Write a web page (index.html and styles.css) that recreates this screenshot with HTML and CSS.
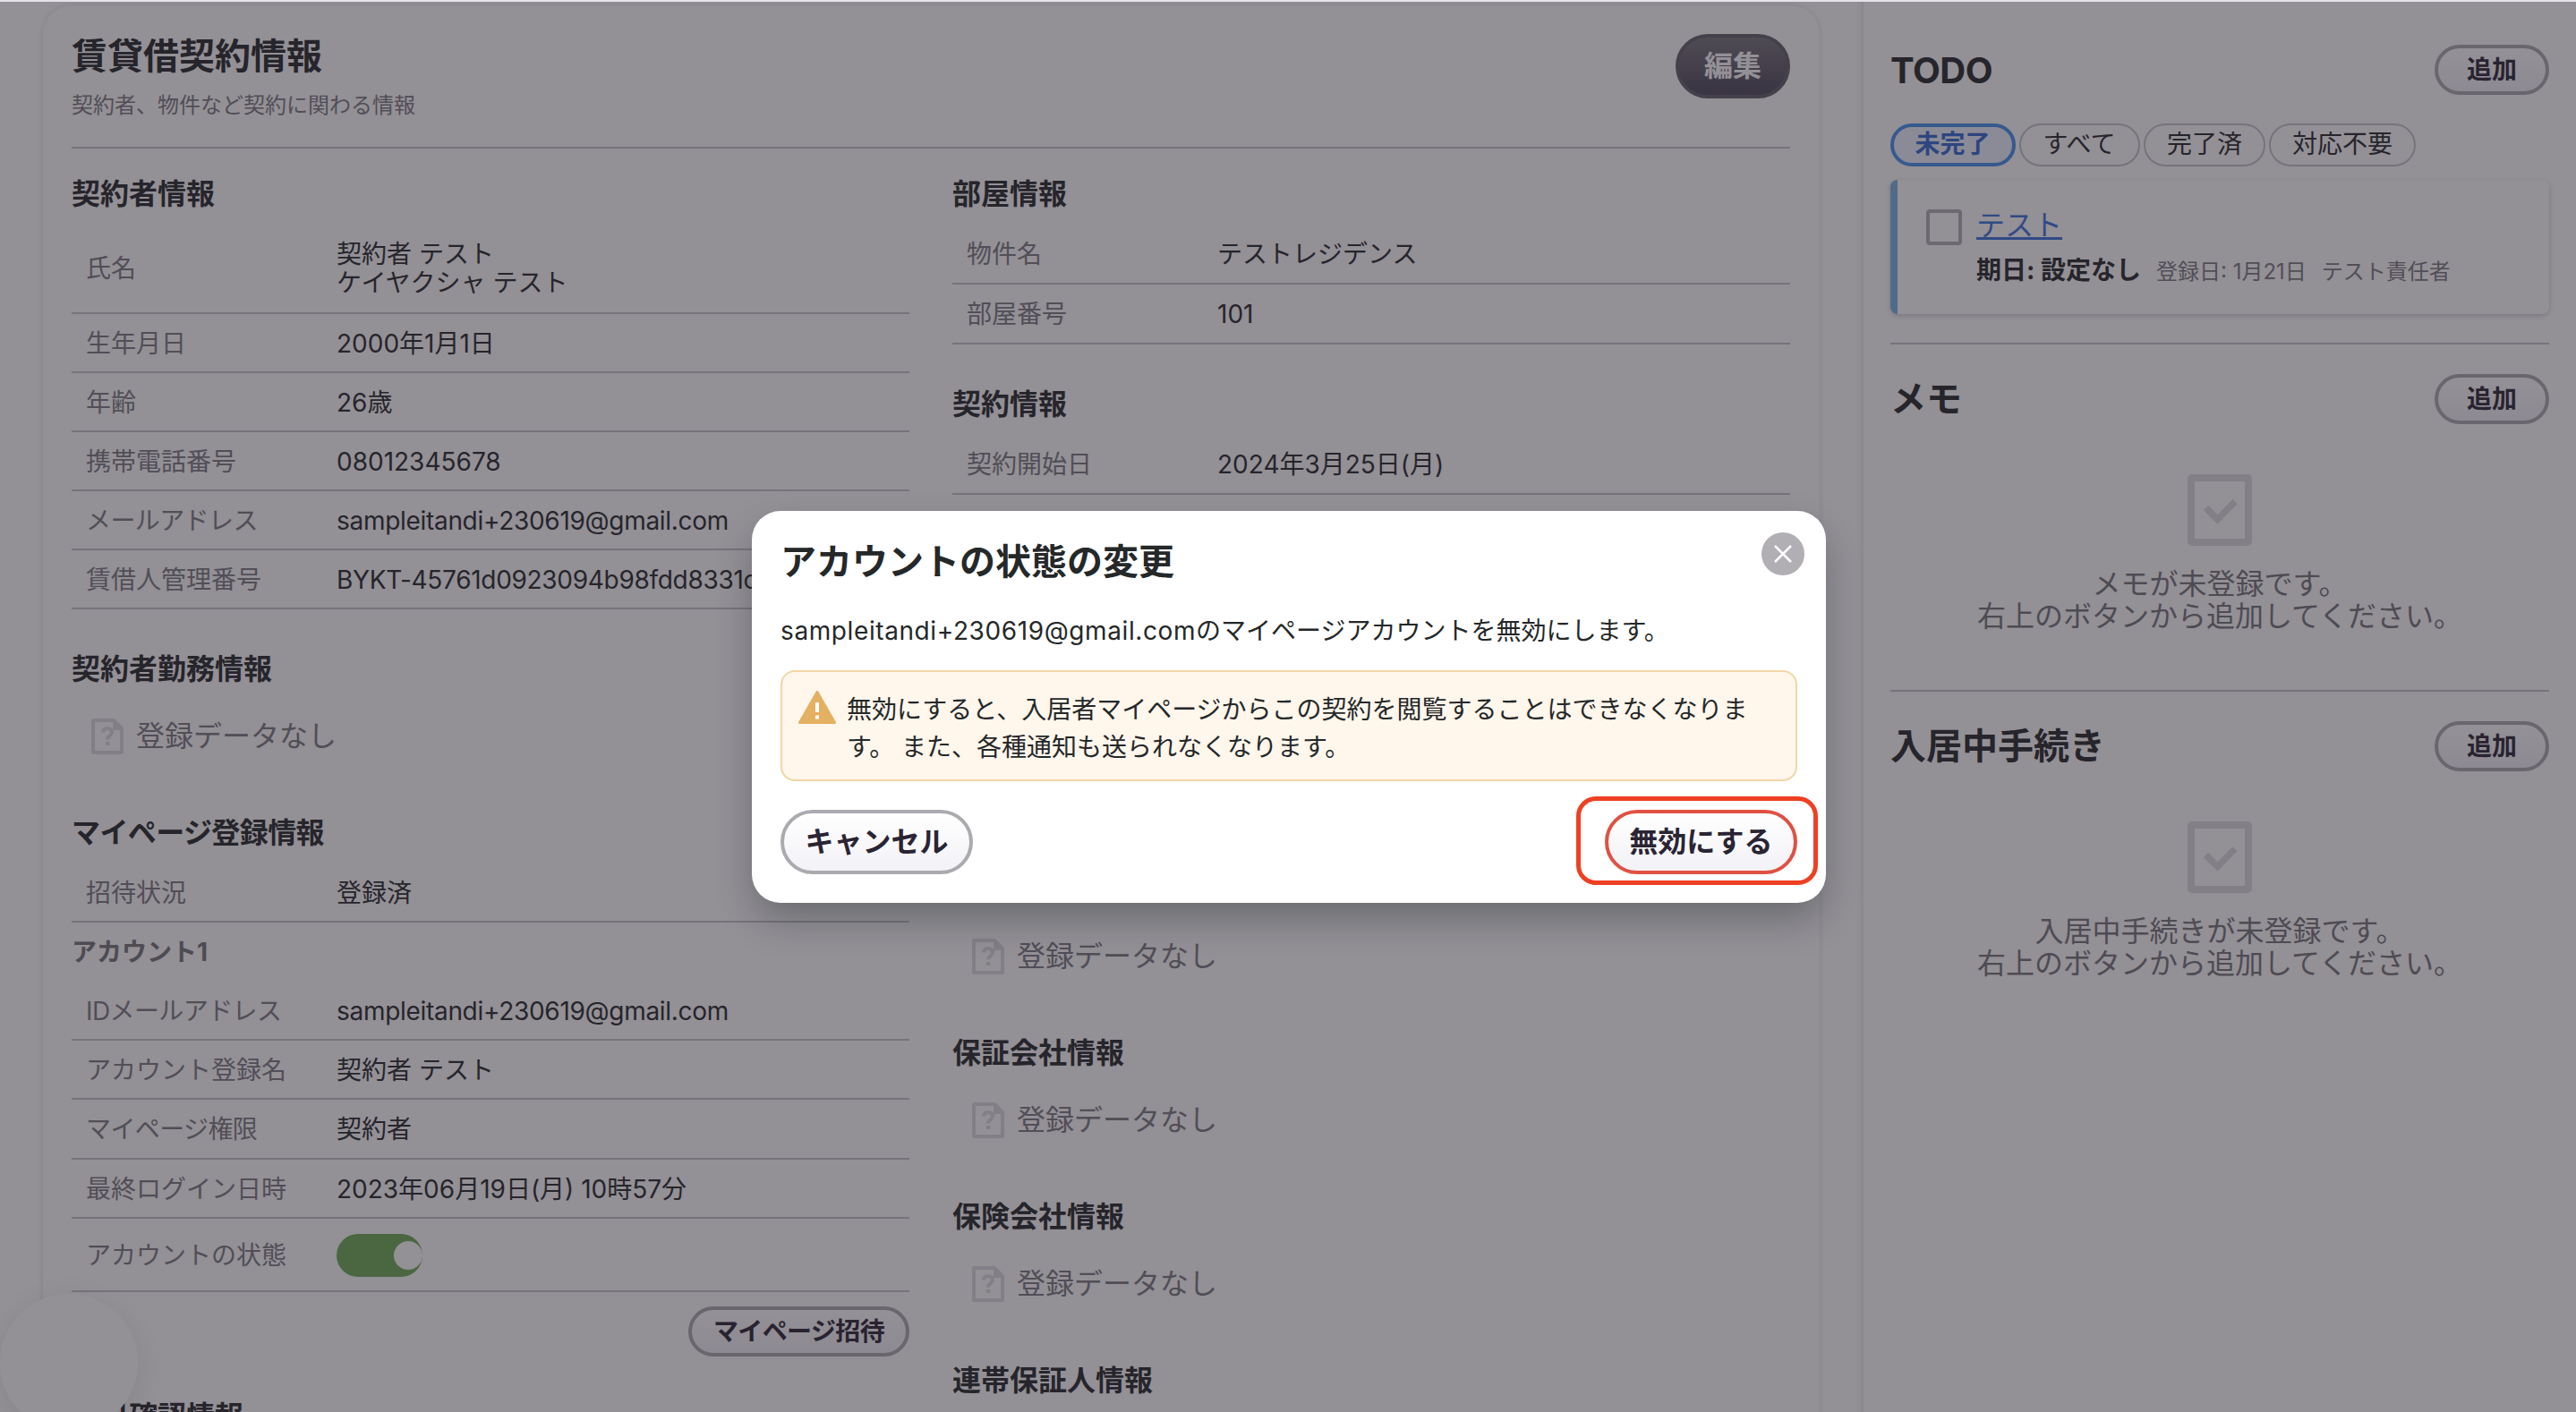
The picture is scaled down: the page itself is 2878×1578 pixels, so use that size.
FILE: index.html
```
<!DOCTYPE html>
<html lang="ja">
  <head>
    <meta charset="UTF-8" />
    <meta name="viewport" content="width=device-width, initial-scale=1.0" />
    <title>賃貸借契約情報</title>
    <link rel="stylesheet" href="styles.css">
  </head>
  <body>
    <svg class="sprite">
      <symbol id="icon-doc" viewBox="0 0 36 40">
        <path d="M2 2h23l9 9v27H2z" fill="none" stroke="currentColor" stroke-width="4" stroke-linejoin="round" />
        <path d="M24 2v11h11z" fill="currentColor" />
        <path d="M13 15.500c0-6 10-6 10 0 0 4-5 3.500-5 8" fill="none" stroke="currentColor" stroke-width="4" />
        <rect x="16" y="26" width="4.500" height="4" fill="currentColor" />
      </symbol>
      <symbol id="icon-check" viewBox="0 0 72 80">
        <rect x="4" y="4" width="64" height="72" rx="1" fill="none" stroke="currentColor" stroke-width="8" />
        <path d="M20.500 37.500l13 13 19.500-20" fill="none" stroke="currentColor" stroke-width="7.500" />
      </symbol>
    </svg>

    <div class="page">
      <main class="contract">
        <header class="contract-header">
          <div>
            <h1>賃貸借契約情報</h1>
            <p class="lead">契約者、物件など契約に関わる情報</p>
          </div>
          <button class="btn btn-large btn-dark">編集</button>
        </header>

        <div class="columns">
          <div class="column">
            <section class="info">
              <h2>契約者情報</h2>
              <dl>
                <div class="row row-name"><dt>氏名</dt><dd>契約者 テスト<br>ケイヤクシャ テスト</dd></div>
                <div class="row"><dt>生年月日</dt><dd>2000年1月1日</dd></div>
                <div class="row"><dt>年齢</dt><dd>26歳</dd></div>
                <div class="row"><dt>携帯電話番号</dt><dd>08012345678</dd></div>
                <div class="row"><dt class="kana">メールアドレス</dt><dd class="latin">sampleitandi+230619@gmail.com</dd></div>
                <div class="row"><dt>賃借人管理番号</dt><dd class="latin">BYKT-45761d0923094b98fdd8331c</dd></div>
              </dl>
            </section>
            <section class="info">
              <h2>契約者勤務情報</h2>
              <p class="empty"><svg><use href="#icon-doc" /></svg>登録データなし</p>
            </section>
            <section class="info">
              <h2 class="kana">マイページ登録情報</h2>
              <dl>
                <div class="row"><dt>招待状況</dt><dd>登録済</dd></div>
              </dl>
              <h3>アカウント1</h3>
              <dl>
                <div class="row"><dt class="kana">IDメールアドレス</dt><dd class="latin">sampleitandi+230619@gmail.com</dd></div>
                <div class="row"><dt>アカウント登録名</dt><dd>契約者 テスト</dd></div>
                <div class="row row-tall"><dt class="kana">マイページ権限</dt><dd>契約者</dd></div>
                <div class="row"><dt>最終ログイン日時</dt><dd>2023年06月19日(月) 10時57分</dd></div>
                <div class="row row-toggle"><dt>アカウントの状態</dt><dd><span class="toggle"></span></dd></div>
              </dl>
              <div class="row-action"><button class="btn btn-invite">マイページ招待</button></div>
            </section>
            <section class="info">
              <h2>本日確認情報</h2>
            </section>
          </div>

          <div class="column">
            <section class="info">
              <h2>部屋情報</h2>
              <dl>
                <div class="row row-tall"><dt>物件名</dt><dd>テストレジデンス</dd></div>
                <div class="row row-tall"><dt>部屋番号</dt><dd>101</dd></div>
              </dl>
            </section>
            <section class="info info-contract">
              <h2>契約情報</h2>
              <dl>
                <div class="row row-tall"><dt>契約開始日</dt><dd>2024年3月25日(月)</dd></div>
              </dl>
            </section>
            <section class="info">
              <h2>仲介担当会社情報</h2>
              <p class="empty"><svg><use href="#icon-doc" /></svg>登録データなし</p>
            </section>
            <section class="info">
              <h2>保証会社情報</h2>
              <p class="empty"><svg><use href="#icon-doc" /></svg>登録データなし</p>
            </section>
            <section class="info">
              <h2>保険会社情報</h2>
              <p class="empty"><svg><use href="#icon-doc" /></svg>登録データなし</p>
            </section>
            <section class="info">
              <h2>連帯保証人情報</h2>
            </section>
          </div>
        </div>
      </main>

      <aside class="side">
        <section class="panel panel-todo">
          <div class="panel-header">
            <h2>TODO</h2>
            <button class="btn">追加</button>
          </div>
          <div class="tabs">
            <span class="tab active">未完了</span>
            <span class="tab">すべて</span>
            <span class="tab">完了済</span>
            <span class="tab">対応不要</span>
          </div>
          <div class="todo">
            <span class="checkbox"></span>
            <div>
              <a class="todo-title">テスト</a>
              <p class="todo-meta"><b>期日: 設定なし</b><span>登録日: 1月21日</span><span>テスト責任者</span></p>
            </div>
          </div>
        </section>
        <section class="panel">
          <div class="panel-header">
            <h2>メモ</h2>
            <button class="btn">追加</button>
          </div>
          <div class="panel-empty">
            <svg><use href="#icon-check" /></svg>
            <p>メモが未登録です。<br>右上のボタンから追加してください。</p>
          </div>
        </section>
        <section class="panel">
          <div class="panel-header">
            <h2>入居中手続き</h2>
            <button class="btn">追加</button>
          </div>
          <div class="panel-empty">
            <svg><use href="#icon-check" /></svg>
            <p>入居中手続きが未登録です。<br>右上のボタンから追加してください。</p>
          </div>
        </section>
      </aside>
    </div>

    <div class="chat-button"></div>

    <div class="overlay">
      <div class="modal">
        <div class="modal-header">
          <h2>アカウントの状態の変更</h2>
          <span class="close">
            <svg viewBox="0 0 20 20"><path d="M1 1l18 18M19 1L1 19" stroke="#fff" stroke-width="2.500" /></svg>
          </span>
        </div>
        <p class="modal-text"><span class="mail">sampleitandi+230619@gmail.com</span>のマイページアカウントを無効にします。</p>
        <div class="alert">
          <svg viewBox="0 0 42 37">
            <path d="M21 1.500L40.500 35.500H1.500z" fill="#e4b061" stroke="#e4b061" stroke-width="3" stroke-linejoin="round" />
            <path d="M21 13v11M21 27.500v4" stroke="#fff" stroke-width="4" />
          </svg>
          <p>無効にすると、入居者マイページからこの契約を閲覧することはできなくなります。 また、各種通知も送られなくなります。</p>
        </div>
        <div class="modal-actions">
          <button class="btn btn-large">キャンセル</button>
          <button class="btn btn-large btn-danger">無効にする</button>
        </div>
      </div>
    </div>
  </body>
</html>
```
FILE: styles.css
```
* {
  box-sizing: border-box;
}
body {
  margin: 0;
  width: 2878px;
  height: 1578px;
  overflow: hidden;
  position: relative;
  font-family: Inter, "Noto Sans CJK JP", sans-serif;
  font-size: 28px;
  line-height: 32px;
  color: #252829;
  background-color: #fff;
}
h1, h2, h3, p, dl, dd {
  margin: 0;
}
button {
  font-family: inherit;
}
.sprite {
  display: none;
}
.page {
  display: flex;
  height: 1578px;
  padding-top: 6px;
  overflow: hidden;
}

/* 契約情報 */
.contract {
  width: 1985px;
  height: 1700px;
  margin: 0 47px 0 48px;
  padding: 32px 33px 0 32px;
  border-radius: 32px;
  box-shadow: 0 0 6px rgba(0, 20, 20, 0.14);
  flex-shrink: 0;
}
.contract-header {
  display: flex;
  justify-content: space-between;
  align-items: flex-start;
  height: 128px;
  border-bottom: 2px solid #c5c5c8;
}
h1 {
  font-size: 40px;
  line-height: 50px;
}
.lead {
  margin-top: 14px;
  font-size: 24px;
  color: #7b7b80;
}
.columns {
  display: flex;
  gap: 48px;
}
.column {
  width: 936px;
}
.info {
  padding-top: 31px;
  margin-bottom: 16px;
}
.info h2 {
  font-size: 32px;
  line-height: 40px;
  margin-bottom: 14px;
}
.info h3 {
  font-size: 28px;
  line-height: 66px;
  color: #757579;
}
.row {
  display: flex;
  align-items: center;
  height: 66px;
  padding-top: 1px;
  border-bottom: 2px solid #c5c5c8;
}
.row-tall {
  height: 67px;
}
.row-name {
  height: 100px;
  padding-bottom: 2px;
}
.row-toggle {
  height: 82px;
}
.row dt {
  width: 296px;
  padding-left: 16px;
  color: #7b7b80;
}
.kana {
  letter-spacing: -0.6px;
}
.latin {
  letter-spacing: -0.3px;
}
.empty {
  display: flex;
  align-items: center;
  gap: 14px;
  height: 82px;
  margin-bottom: 16px;
  padding-left: 22px;
  font-size: 32px;
  color: #7b7b80;
}
.empty svg {
  width: 36px;
  height: 40px;
  color: #dddde0;
}
.info-contract {
  height: 526px;
}
.toggle {
  display: flex;
  justify-content: flex-end;
  align-items: center;
  width: 96px;
  height: 48px;
  border-radius: 24px;
  background-color: #6fac56;
}
.toggle::after {
  content: "";
  width: 32px;
  height: 32px;
  border-radius: 50%;
  background-color: #fff;
}
.row-action {
  display: flex;
  justify-content: flex-end;
  padding-top: 16px;
}

/* ボタン */
.btn {
  height: 56px;
  padding: 0 21.500px;
  border: 4px solid #ababaf;
  border-radius: 28px;
  background: linear-gradient(#fff, #f2f2f7);
  color: #2a2433;
  font-size: 28px;
  font-weight: bold;
  line-height: 46px;
}
.btn-large {
  height: 72px;
  padding: 0 23.500px;
  border-radius: 36px;
  font-size: 32px;
  line-height: 60px;
}
.btn-invite {
  width: 247px;
  letter-spacing: -0.6px;
}
.btn-dark {
  width: 128px;
  border-color: #63606a;
  background: linear-gradient(#77757b, #4b4657);
  color: #fff;
}
.btn-danger {
  border-color: #e05142;
}

/* サイドバー */
.side {
  flex: 1;
  height: 1700px;
  margin-top: -6px;
  padding: 0 30px 0 30px;
  border-left: 2px solid #eeeeef;
  box-shadow: 0 0 8px rgba(0, 20, 20, 0.1);
}
.panel {
  height: 388px;
  padding-top: 33px;
  border-bottom: 2px solid #c5c5c8;
}
.panel:last-child {
  border-bottom: none;
}
.panel-todo {
  height: 385px;
  padding-top: 50px;
}
.panel-header {
  display: flex;
  justify-content: space-between;
  align-items: center;
}
.panel-header h2 {
  font-size: 40px;
  line-height: 56px;
}
.panel-todo h2 {
  padding-top: 2px;
  line-height: 54px;
  letter-spacing: -0.5px;
}
.panel-header .btn {
  width: 128px;
}
.tabs {
  display: flex;
  gap: 4px;
  margin-top: 32px;
}
.tab {
  height: 48px;
  padding: 0 23.500px;
  border: 2px solid #c5c5c8;
  border-radius: 24px;
  line-height: 43px;
}
.tab:not(.active) {
  padding: 0 23.500px 0 24.500px;
  min-width: 134.500px;
}
.tab.active {
  width: 140px;
  border: 4px solid #4591ee;
  background-color: #edf5ff;
  color: #3569d0;
  font-weight: bold;
  line-height: 39px;
}
.todo {
  display: flex;
  gap: 16px;
  height: 150px;
  margin-top: 15px;
  padding: 33px 32px 0;
  border-left: 8px solid #78b4e4;
  border-radius: 8px;
  box-shadow: 0 2px 6px rgba(0, 20, 20, 0.2);
}
.checkbox {
  width: 40px;
  height: 40px;
  border: 4px solid #b0b0b4;
  border-radius: 4px;
}
.todo-title {
  display: block;
  font-size: 32px;
  line-height: 36px;
  color: #3b72dd;
  text-decoration: underline;
}
.todo-meta {
  display: flex;
  align-items: baseline;
  gap: 17px;
  margin-top: 16px;
}
.todo-meta span {
  font-size: 24px;
  color: #7b7b80;
}
.panel-empty {
  display: flex;
  flex-direction: column;
  align-items: center;
  margin-top: 56px;
  font-size: 32px;
  line-height: 36px;
  text-align: center;
  color: #757579;
}
.panel-empty svg {
  width: 72px;
  height: 80px;
  margin-bottom: 25px;
  color: #dddde0;
}

.chat-button {
  position: absolute;
  left: 0;
  top: 1446px;
  width: 154px;
  height: 154px;
  border-radius: 50%;
  background-color: #fff;
  box-shadow: 0 8px 40px rgba(0, 20, 20, 0.1);
}

/* モーダル */
.overlay {
  position: absolute;
  inset: 0;
  display: flex;
  justify-content: center;
  align-items: flex-start;
  padding-top: 569px;
  border-top: 2px solid #e7e1ea;
  background-color: rgba(39, 33, 45, 0.5);
  background-clip: padding-box;
}
.modal {
  width: 1200px;
  height: 438px;
  margin-left: 2px;
  padding: 24px 32px;
  border-radius: 32px;
  background-color: #fff;
  box-shadow: 0 20px 44px -6px rgba(20, 30, 30, 0.36);
}
.modal-header {
  display: flex;
  justify-content: space-between;
  height: 64px;
}
.modal-header h2 {
  font-size: 40px;
  line-height: 66px;
}
.close {
  display: flex;
  justify-content: center;
  align-items: center;
  width: 48px;
  height: 48px;
  margin-right: -8px;
  border-radius: 50%;
  background-color: #b1aeb4;
}
.close svg {
  width: 20px;
  height: 20px;
}
.modal-text {
  margin-top: 25px;
  line-height: 42px;
}
.mail {
  letter-spacing: 0.6px;
}
.alert {
  display: flex;
  gap: 12px;
  height: 124px;
  margin-top: 23px;
  padding: 21px 30px 0 18px;
  border: 2px solid #f2d6a6;
  border-radius: 16px;
  background-color: #fff6ec;
  line-height: 42px;
}
.alert svg {
  width: 42px;
  height: 37px;
  flex-shrink: 0;
}
.modal-actions {
  display: flex;
  justify-content: space-between;
  margin-top: 32px;
}
.btn-danger {
  position: relative;
}
/* 強調枠 */
.btn-danger::after {
  content: "";
  position: absolute;
  inset: -19px -27px -16px -36px;
  border: 5px solid #ee4023;
  border-radius: 22px;
}
```
